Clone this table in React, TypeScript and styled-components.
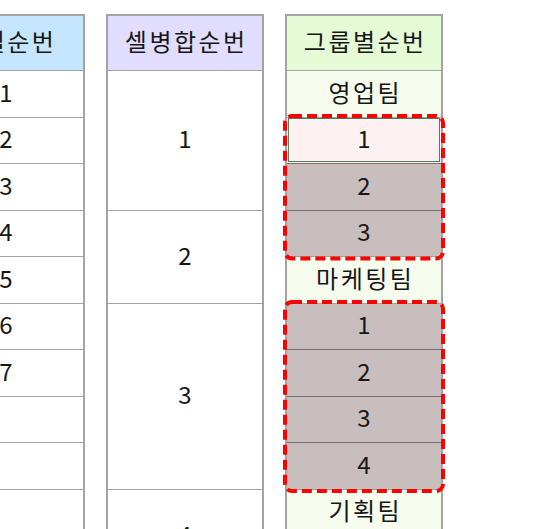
import React from 'react';
import styled, { createGlobalStyle, css } from 'styled-components';

const ROW = 46.5;

const Global = createGlobalStyle`
  html, body { margin: 0; padding: 0; background: #ffffff; overflow: hidden; }
  body { font-family: "Noto Sans CJK KR", "Noto Sans", sans-serif; color: #161616; }
`;

const Board = styled.div`
  display: flex;
  align-items: flex-start;
  gap: 21px;
  padding-top: 14px;
  margin-left: -73px;
  height: 529px;
  box-sizing: border-box;
  overflow: hidden;
`;

const Column = styled.div`
  width: 158px;
  flex: none;
  display: flex;
  flex-direction: column;
  border: 2px solid #a3a3a3;
  border-bottom: none;
  box-sizing: border-box;
`;

const Header = styled.div<{ $bg: string }>`
  height: 54px;
  display: flex;
  align-items: center;
  justify-content: center;
  background: ${(p) => p.$bg};
  font-size: 24px;
  line-height: 1;
  letter-spacing: 2.5px;
  padding: 0 0 4px 2.5px;
  box-sizing: border-box;
`;

type Tone = 'plain' | 'label' | 'marked' | 'selected';

const Cell = styled.div<{ $span?: number; $tone?: Tone; $inner?: boolean }>`
  height: ${(p) => (p.$span ?? 1) * ROW}px;
  flex: none;
  box-sizing: border-box;
  display: flex;
  align-items: center;
  justify-content: center;
  font-size: 24px;
  line-height: 1;
  padding-bottom: 4px;
  border-top: 1px solid ${(p) => (p.$inner ? '#7b6f6f' : '#a3a3a3')};
  background: ${(p) =>
    p.$tone === 'label'
      ? '#f6fdef'
      : p.$tone === 'marked'
      ? '#c9bebe'
      : p.$tone === 'selected'
      ? '#fdf1f1'
      : '#ffffff'};
  ${(p) =>
    p.$tone === 'label' &&
    css`
      letter-spacing: 2.5px;
      padding-left: 2.5px;
    `}
  ${(p) =>
    p.$tone === 'selected' &&
    css`
      outline: 1px solid #4d7d5c;
      outline-offset: -2px;
    `}
`;

const Group = styled.div`
  position: relative;
  display: flex;
  flex-direction: column;
`;

const DashFrame = styled.svg`
  position: absolute;
  top: -1px;
  bottom: -2px;
  left: -2px;
  right: -2px;
  width: calc(100% + 4px);
  height: calc(100% + 3px);
  overflow: visible;
  pointer-events: none;
  z-index: 1;
`;

function Marked({ children }: { children: React.ReactNode }) {
  return (
    <Group>
      {children}
      <DashFrame aria-hidden="true">
        <rect
          x="0"
          y="0"
          width="100%"
          height="100%"
          rx="7"
          fill="none"
          stroke="#ff0000"
          strokeWidth="4"
          strokeDasharray="10 5"
        />
      </DashFrame>
    </Group>
  );
}

const plain = [1, 2, 3, 4, 5, 6, 7, '', '', ''];

export default function App() {
  return (
    <>
      <Global />
      <Board>
        <Column>
          <Header $bg="#c5e4fd">행별순번</Header>
          {plain.map((v, i) => (
            <Cell key={i}>{v}</Cell>
          ))}
        </Column>
        <Column>
          <Header $bg="#e1ddff">셀병합순번</Header>
          <Cell $span={3}>1</Cell>
          <Cell $span={2}>2</Cell>
          <Cell $span={4}>3</Cell>
          <Cell $span={2}>4</Cell>
        </Column>
        <Column>
          <Header $bg="#e4fbd6">그룹별순번</Header>
          <Cell $tone="label">영업팀</Cell>
          <Marked>
            <Cell $tone="selected">1</Cell>
            <Cell $tone="marked" $inner>2</Cell>
            <Cell $tone="marked" $inner>3</Cell>
          </Marked>
          <Cell $tone="label">마케팅팀</Cell>
          <Marked>
            <Cell $tone="marked">1</Cell>
            <Cell $tone="marked" $inner>2</Cell>
            <Cell $tone="marked" $inner>3</Cell>
            <Cell $tone="marked" $inner>4</Cell>
          </Marked>
          <Cell $tone="label">기획팀</Cell>
        </Column>
      </Board>
    </>
  );
}
